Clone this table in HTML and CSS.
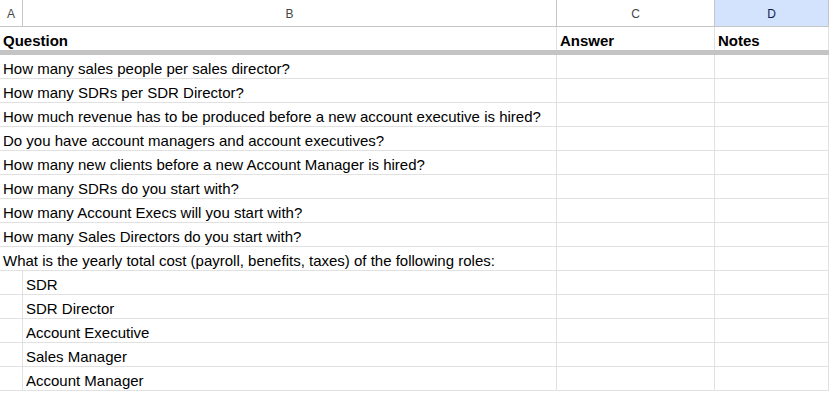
FILE: index.html
```html
<!DOCTYPE html>
<html>
<head>
<meta charset="utf-8">
<link rel="stylesheet" href="styles.css">
</head>
<body>
<div class="sheet">
  <div class="hd">A</div>
  <div class="hd">B</div>
  <div class="hd">C</div>
  <div class="hd sel">D</div>

  <div class="c span b">Question</div>
  <div class="c b">Answer</div>
  <div class="c b">Notes</div>

  <div class="freeze"></div>

  <div class="c span">How many sales people per sales director?</div><div class="c"></div><div class="c"></div>
  <div class="c span">How many SDRs per SDR Director?</div><div class="c"></div><div class="c"></div>
  <div class="c span">How much revenue has to be produced before a new account executive is hired?</div><div class="c"></div><div class="c"></div>
  <div class="c span">Do you have account managers and account executives?</div><div class="c"></div><div class="c"></div>
  <div class="c span">How many new clients before a new Account Manager is hired?</div><div class="c"></div><div class="c"></div>
  <div class="c span">How many SDRs do you start with?</div><div class="c"></div><div class="c"></div>
  <div class="c span">How many Account Execs will you start with?</div><div class="c"></div><div class="c"></div>
  <div class="c span">How many Sales Directors do you start with?</div><div class="c"></div><div class="c"></div>
  <div class="c span">What is the yearly total cost (payroll, benefits, taxes) of the following roles:</div><div class="c"></div><div class="c"></div>
  <div class="c"></div><div class="c">SDR</div><div class="c"></div><div class="c"></div>
  <div class="c"></div><div class="c">SDR Director</div><div class="c"></div><div class="c"></div>
  <div class="c"></div><div class="c">Account Executive</div><div class="c"></div><div class="c"></div>
  <div class="c"></div><div class="c">Sales Manager</div><div class="c"></div><div class="c"></div>
  <div class="c"></div><div class="c">Account Manager</div><div class="c"></div><div class="c"></div>
</div>
</body>
</html>
```

FILE: styles.css
```css
html, body {
  margin: 0;
  padding: 0;
  background: #fff;
  overflow: hidden;
}
body {
  width: 829px;
  height: 393px;
  font-family: "Liberation Sans", Arial, sans-serif;
  color: #000;
}
.sheet {
  display: grid;
  grid-template-columns: 23px 534px 158px 114px;
  grid-template-rows: 27px 23px 5px;
  grid-auto-rows: 24px;
}
.hd {
  box-sizing: border-box;
  border-right: 1px solid #c4c7c5;
  border-bottom: 1px solid #c4c7c5;
  background: #fff;
  color: #444746;
  font-size: 12px;
  display: flex;
  align-items: center;
  justify-content: center;
  padding-top: 1px;
}
.hd.sel {
  background: #d3e3fd;
  color: #0b1f4d;
}
.c {
  box-sizing: border-box;
  border-right: 1px solid #e1e1e1;
  border-bottom: 1px solid #e1e1e1;
  font-size: 15px;
  line-height: 17px;
  padding: 0 3px 1px 3px;
  display: flex;
  align-items: flex-end;
  white-space: nowrap;
  overflow: hidden;
}
.span {
  grid-column: span 2;
}
.b {
  font-weight: bold;
  border-bottom: none;
  padding-bottom: 1px;
}
.freeze {
  grid-column: 1 / -1;
  background: #c4c4c4;
}
```
